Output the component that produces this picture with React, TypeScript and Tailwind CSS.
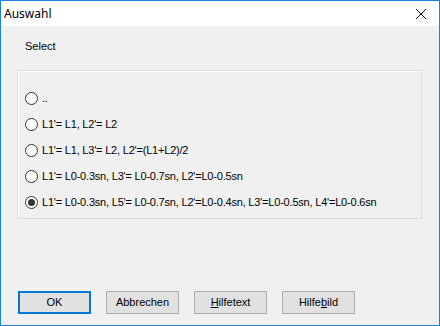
import React, { useState } from "react";

const options = [
  "..",
  "L1'= L1, L2'= L2",
  "L1'= L1, L3'= L2, L2'=(L1+L2)/2",
  "L1'= L0-0.3sn, L3'= L0-0.7sn, L2'=L0-0.5sn",
  "L1'= L0-0.3sn, L5'= L0-0.7sn, L2'=L0-0.4sn, L3'=L0-0.5sn, L4'=L0-0.6sn",
];

function Radio({ checked }: { checked: boolean }) {
  return (
    <span className="w-[13px] h-[13px] rounded-full border border-[#333] bg-white flex items-center justify-center shrink-0">
      {checked && <span className="w-[7px] h-[7px] rounded-full bg-[#333]" />}
    </span>
  );
}

export default function App() {
  const [sel, setSel] = useState(4);

  return (
    <div className="w-[440px] h-[326px] border border-[#1883d7] bg-[#f0f0f0] flex flex-col font-['Liberation_Sans',sans-serif] text-[11px] text-black overflow-hidden">
      {/* Title bar */}
      <div className="h-[25px] bg-white flex items-center justify-between pl-[3px] pr-[12px] shrink-0">
        <span className="font-['Noto_Sans',sans-serif] text-[12px] leading-none">Auswahl</span>
        <svg width="12" height="12" viewBox="0 0 12 12" className="mt-[1px]">
          <path d="M1 1 L11 11 M11 1 L1 11" stroke="#111" strokeWidth="1" />
        </svg>
      </div>

      <div className="flex-1 flex flex-col px-[16px]">
        <div className="pl-[8px] pt-[12px] h-[44px]">Select</div>

        {/* Group box */}
        <div className="w-[405px] h-[149px] border border-[#dcdcdc] shadow-[inset_1px_1px_0_#fff] flex flex-col pt-[14px] pl-[7px]">
          {options.map((opt, i) => (
            <button
              key={i}
              onClick={() => setSel(i)}
              className="h-[26px] flex items-center gap-[4px] text-left"
            >
              <Radio checked={sel === i} />
              <span className="whitespace-nowrap tracking-[-0.2px]">{opt}</span>
            </button>
          ))}
        </div>

        {/* Buttons */}
        <div className="flex gap-[15px] mt-[72px] pl-[1px]">
          <button className="w-[73px] h-[23px] border-2 border-[#0078d7] bg-[#e1e1e1]">OK</button>
          <button className="w-[73px] h-[23px] border border-[#adadad] bg-[#e1e1e1]">Abbrechen</button>
          <button className="w-[73px] h-[23px] border border-[#adadad] bg-[#e1e1e1]">
            <span className="underline">H</span>ilfetext
          </button>
          <button className="w-[73px] h-[23px] border border-[#adadad] bg-[#e1e1e1]">
            Hilfe<span className="underline">b</span>ild
          </button>
        </div>
      </div>
    </div>
  );
}
